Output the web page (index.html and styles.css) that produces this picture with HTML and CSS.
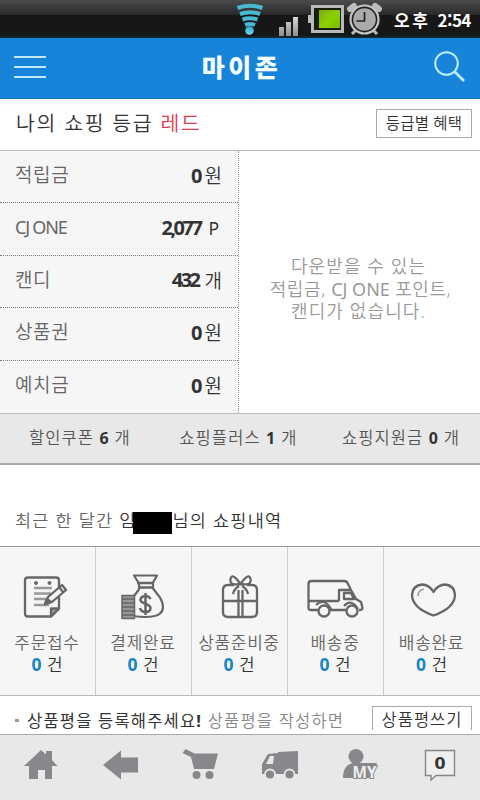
FILE: index.html
```html
<!DOCTYPE html>
<html lang="ko">
<head>
<meta charset="utf-8">
<title>마이존</title>
<link rel="stylesheet" href="styles.css">
</head>
<body>
<div class="status">
  <svg class="status-icons" viewBox="0 0 150 38" width="150" height="38">
    <defs>
      <linearGradient id="wifi" x1="0" y1="0" x2="0" y2="1"><stop offset="0" stop-color="#2aa5c4"/><stop offset="1" stop-color="#7adcf0"/></linearGradient>
      <linearGradient id="metal" x1="0" y1="0" x2="0" y2="1"><stop offset="0" stop-color="#d8d8d8"/><stop offset="1" stop-color="#8d8d8d"/></linearGradient>
      <linearGradient id="green" x1="0" y1="0" x2="1" y2="1"><stop offset="0" stop-color="#7ba80a"/><stop offset=".5" stop-color="#8dd000"/><stop offset="1" stop-color="#76bd00"/></linearGradient>
    </defs>
    <g fill="none" stroke="#48b9d5" stroke-width="4">
      <path d="M7.500 8Q20 3.500 32.500 8"/><path d="M10 14Q20 10.500 30 14"/><path d="M12.500 19.500Q20 17 27.500 19.500"/><path d="M15 24.800Q20 23 25 24.800"/>
    </g>
    <circle cx="19.500" cy="30.500" r="4.300" fill="url(#wifi)"/>
    <path fill="url(#metal)" d="M49 27h5v9h-5zM56 22h5v14h-5zM63 17h5v19h-5z"/>
    <path fill="none" stroke="#b9b9b9" stroke-width="3" d="M82.500 6.500h30v25h-30z"/>
    <path fill="#bbb" d="M78 15h4v8h-4z"/><path fill="#171d08" d="M84 8h27v22H84z"/><path fill="url(#green)" d="M89 10h21v18H89z"/>
    <g stroke="#bbb" fill="none"><path stroke-width="3" d="M126 30l-4 4M143 30l4 4"/><path stroke-width="6" stroke-linecap="round" d="M120 9l4-3M145 6l4 3"/></g>
    <circle cx="134.500" cy="19.500" r="14" fill="#222" stroke="#c5c5c5" stroke-width="2.200"/><circle cx="134.500" cy="19.500" r="11.300" fill="#aaa"/>
    <path fill="none" stroke="#222" stroke-width="1.700" d="M134.500 12v9h-8"/>
  </svg>
  <span class="clock">오후 <b>2:54</b></span>
</div>
<header class="header">
  <svg width="32" height="24" viewBox="0 0 32 24"><path stroke="#bfe9ff" stroke-width="2" d="M0 2h32M0 12h32M0 22h32"/></svg>
  <h1>마이존</h1>
  <svg width="32" height="32" viewBox="0 0 32 32" fill="none" stroke="#bcecff"><circle cx="13.500" cy="12.500" r="11.300" stroke-width="2"/><path stroke-width="2.600" d="M21.500 20.500l9.500 9.500"/></svg>
</header>
<section class="grade">
  <h2>나의 쇼핑 등급 <em>레드</em></h2>
  <span class="button grade-button">등급별 혜택</span>
</section>
<section class="assets">
  <div class="asset-list">
    <div class="asset"><span class="name">적립금</span><b>0</b><span class="unit">원</span></div>
    <div class="asset"><span class="name latin">CJ ONE</span><b class="tight">2,077</b><span class="unit point">P</span></div>
    <div class="asset"><span class="name">캔디</span><b class="tight">432</b><span class="unit">개</span></div>
    <div class="asset"><span class="name">상품권</span><b>0</b><span class="unit">원</span></div>
    <div class="asset"><span class="name">예치금</span><b>0</b><span class="unit">원</span></div>
  </div>
  <p class="empty"><span class="loose">다운받을 수 있는</span><span class="mid">적립금, <span class="brand">CJ ONE</span> 포인트,</span><span class="loose">캔디가 없습니다.</span></p>
</section>
<section class="coupons">
  <span>할인쿠폰 <b>6</b> 개</span><span class="plus">쇼핑플러스 <b>1</b> 개</span><span>쇼핑지원금 <b>0</b> 개</span>
</section>
<h3 class="history"><span>최근 한 달간</span> 임<i class="mask"></i>님의 쇼핑내역</h3>
<section class="orders">
  <div class="order">
    <svg viewBox="0 0 60 50" width="60" height="50" fill="none" stroke="#666" stroke-width="2.300" stroke-linejoin="round">
      <path d="M10 4.500h28q3 0 3 3v28l-8 8H10q-3 0-3-3v-33q0-3 3-3z"/><path fill="#999" d="M33 43.500v-8h8z"/><path stroke="#999" d="M16 15h18M16 20.500h17M16 26h12M16 32h15"/><path fill="#f5f5f5" d="M27 31l3-7 14-12 4 5-14 12z"/><path d="M41 14l4 5"/><path fill="#666" d="M27 31l2-5 4 3z"/><circle cx="18" cy="10" r="1.500" fill="#666" stroke-width="1"/><circle cx="31.500" cy="10" r="1.500" fill="#666" stroke-width="1"/>
    </svg><span class="label">주문접수</span><span class="count"><b>0</b> 건</span></div>
  <div class="order">
    <svg viewBox="0 0 60 50" width="60" height="50" fill="none" stroke="#666" stroke-width="2.200" stroke-linejoin="round">
      <path d="M20 2.500h23l-4 7v6l7 9q6 11 0 16-4 3.500-15 3.500t-14-2.500q-5-6 1-16l7-9v-6z"/><path stroke-width="2.500" d="M23 10h17M24 14.500h15"/><path fill="#999" stroke-width="1.500" d="M8 22.500h12.500v23H8z"/><path stroke-width="1.600" d="M8 26h12.500M8 30h12.500M8 34h12.500M8 38h12.500M8 42h12.500"/><path stroke-width="2.500" d="M36.500 26Q35 23 31.500 23q-5 .5-5 4c0 4 10 3.500 10 8 0 3-2 4-5 4s-5-1.500-5.500-4M31.500 20v22"/>
    </svg><span class="label">결제완료</span><span class="count"><b>0</b> 건</span></div>
  <div class="order">
    <svg viewBox="0 0 60 50" width="60" height="50" fill="none" stroke="#666" stroke-width="2.300" stroke-linejoin="round">
      <path d="M24 12h-6q-5 0-5 5v22q0 5 5 5h24q5 0 5-5V17q0-5-5-5h-5M13 28h34M30.500 11Q19 13 20.500 6T30.500 11Q42 13 40.500 6T30.500 11M29 13q-5 3-6 8M32 13q5 3 6 8M28.500 17v26M32.500 17v26"/>
    </svg><span class="label">상품준비중</span><span class="count"><b>0</b> 건</span></div>
  <div class="order">
    <svg viewBox="0 0 60 50" width="60" height="50" fill="none" stroke="#666" stroke-width="2.300" stroke-linejoin="round">
      <path d="M12 37H5q-2.500 0-2.500-2V11q0-3 3-3H38q3 0 4 3l3 6 5 9 5 3 1.500 6q0 2-3.500 2M24 37h16M33 28V17h12M38 20h7l3 6H38zM3 28h30M10 32q8-8 15 4M38 33q7-8 14 3"/><circle cx="18" cy="38" r="5.500" fill="#f6f6f6"/><circle cx="46" cy="38" r="5.500" fill="#f6f6f6"/>
    </svg><span class="label">배송중</span><span class="count"><b>0</b> 건</span></div>
  <div class="order">
    <svg viewBox="0 0 60 50" width="60" height="50" fill="none" stroke="#666" stroke-width="2.300" stroke-linejoin="round">
      <path d="M30.500 19Q26 11.500 19 11.500q-9 1-10 10Q9 35 30.500 42.500 52 35 52 21.500q-1-9-9.500-10-7.500 0-12 7.500z"/><path stroke="#999" stroke-width="1.500" d="M15 23q0-6 6-7"/>
    </svg><span class="label">배송완료</span><span class="count"><b>0</b> 건</span></div>
</section>
<section class="review"><i class="dot"></i><p><strong>상품평을 등록해주세요<b>!</b></strong> 상품평을 작성하면</p><span class="button review-button">상품평쓰기</span></section>
<nav class="nav">
  <svg viewBox="0 0 80 60" fill="#87888b"><path d="M24 31L41 15l5 4.500V16h6v9l5.500 6H52v13h-7v-9h-7v9h-9V31z"/></svg>
  <svg viewBox="0 0 80 60" fill="#87888b"><path d="M23 30l18-14.500v7h17v15H41v7z"/></svg>
  <svg viewBox="0 0 80 60" fill="#87888b"><path d="M22.500 18l3-4 9 4.500h23.500L54 34H34l-3-12z"/><circle cx="36.500" cy="40" r="4"/><circle cx="49.500" cy="40" r="4"/></svg>
  <svg viewBox="0 0 80 60" fill="#87888b"><path d="M38 17l20-1v23H22V29l6-10 10-1z"/><path fill="#e8e8e8" d="M30 21h4l-1 8h-7z"/><g stroke="#e8e8e8" stroke-width="1.800"><circle cx="30" cy="39.500" r="5"/><circle cx="49.500" cy="39.500" r="5"/></g></svg>
  <svg viewBox="0 0 80 60" fill="#87888b"><circle cx="36" cy="21.500" r="7.500"/><path d="M23 43q0-13 10-15h24l-5 15z"/><text class="my" x="32.500" y="42.500" textLength="24" lengthAdjust="spacingAndGlyphs">MY</text></svg>
  <svg viewBox="0 0 80 60"><path fill="#eee" stroke="#85858a" stroke-width="1.400" d="M25.500 15.500h29v25H36l-5 4.500v-4.500h-5.500z"/><text class="zero" x="34.500" y="33.500" textLength="11" lengthAdjust="spacingAndGlyphs">0</text></svg>
</nav>
</body>
</html>
```
FILE: styles.css
```css
* { box-sizing: border-box; }
body {
  margin: 0; width: 480px; height: 800px; overflow: hidden;
  display: flex; flex-direction: column; background: #fff; color: #333;
  font-family: "Noto Sans", "Noto Sans CJK KR", sans-serif; font-weight: 350;
  white-space: nowrap;
}
h1, h2, h3, p { margin: 0; font-weight: inherit; }
i, em { font-style: normal; }
svg { display: block; flex: none; overflow: visible; }
b { font-weight: 700; }
.status { height: 38px; flex: none; display: flex; align-items: center; padding-left: 230px; background: linear-gradient(#4c4c4c, #292929 39%, #171717 40%, #171717 92%, #102b3e); }
.clock { margin-left: 14px; padding-top: 1px; color: #fff; font: 700 17px "Noto Sans CJK KR", sans-serif; letter-spacing: 2.5px; }
.clock b { letter-spacing: -.6px; font-size: 17px; }
.header { height: 61px; flex: none; display: flex; align-items: center; justify-content: space-between; padding: 0 15px 3px 14px; background: #1784da; border-bottom: 1px solid #1371b5; }
.header h1 { color: #f4fdff; font: 900 25px/1 "Noto Sans CJK KR", sans-serif; letter-spacing: 3.5px; padding-left: 4px; }
.grade { height: 52px; flex: none; display: flex; align-items: flex-start; justify-content: space-between; padding: 10px 8px 0 16px; background: linear-gradient(#eef5f9, #fff 7px); border-bottom: 1px solid #bbb; }
.grade h2 { font-size: 20.5px; line-height: 28px; letter-spacing: 1.7px; }
.grade em { color: #e03b50; }
.button { display: flex; align-items: center; justify-content: center; border: 1px solid #aaa; background: #fff; color: #333; }
.grade-button { width: 96px; height: 29px; font-size: 15.5px; padding-bottom: 2px; letter-spacing: .2px; }
.assets { height: 262px; flex: none; display: flex; }
.asset-list { width: 239px; display: grid; grid-template-rows: repeat(5, 1fr); background: #f6f6f6; border-right: 1px dotted #999; }
.asset { display: flex; align-items: center; padding: 0 16px 3px 15px; border-bottom: 1px dotted #777; font-size: 18px; }
.asset:last-child { border: 0; }
.name { flex: 1; color: #666; font-size: 19px; padding-bottom: 2px; letter-spacing: .6px; }
.asset b { font-size: 20px; margin-right: 2px; }
.asset .tight { letter-spacing: -2.5px; margin-right: 6px; }
.name.latin { font-size: 18px; font-weight: 400; letter-spacing: -1.2px; }
.unit { font-size: 19px; }
.point { font-size: 17.5px; font-weight: 400; padding: 0 3px 0 2px; }
.empty { flex: 1; display: flex; flex-direction: column; align-items: center; padding: 104px 2px 0 0; font-size: 18px; line-height: 22.5px; color: #999; }
.loose { letter-spacing: 1.1px; }
.mid { letter-spacing: .6px; padding-left: 4px; }
.brand { font-weight: 400; letter-spacing: 0; }
.coupons { height: 52px; flex: none; display: flex; justify-content: space-between; align-items: center; padding: 0 20px 3px 29px; background: #e8e8e8; border-top: 1px solid #bbb; border-bottom: 2px solid #aaa; color: #555; font-size: 16.5px; letter-spacing: 1.1px; }
.coupons b { color: #333; font-size: 16px; letter-spacing: .5px; }
.plus { padding-left: 4px; }
.history { height: 82px; flex: none; display: flex; align-items: center; padding: 28px 0 0 15px; border-bottom: 1px solid #999; font-size: 17.5px; letter-spacing: 1.25px; white-space: pre; }
.history span { color: #666; }
.mask { width: 39px; height: 22px; margin: 7px 1px 0 -4px; background: #000; z-index: 1; }
.orders { height: 149px; flex: none; display: grid; grid-template-columns: repeat(5, 96px); background: #f6f6f6; border-bottom: 1px solid #bbb; }
.order { display: flex; flex-direction: column; align-items: center; padding-top: 26px; border-right: 1px solid #ccc; }
.order:last-child { border: 0; }
.order svg { margin-left: 1px; }
.label { margin: 9px 1px 0 0; font-size: 17px; line-height: 22px; letter-spacing: .7px; color: #666; }
.count { font-size: 17px; line-height: 20px; margin-right: 1px; }
.count b { color: #1686c8; margin-right: 1px; font-size: 17.5px; }
.review { height: 38px; flex: none; display: flex; align-items: flex-start; padding: 10px 8px 0 15px; color: #888; font-size: 16.5px; }
.review p { flex: 1; line-height: 30px; letter-spacing: 1.2px; }
.review strong { font-weight: 400; color: #333; }
.dot { width: 4px; height: 3px; margin: 13px 8px 0 0; background: #999; }
.review-button { width: 100px; height: 24px; border-bottom: 0; font-size: 16.5px; letter-spacing: 1px; }
.nav { flex: 1; display: grid; grid-template-columns: repeat(6, 80px); background: #e8e8e8; border-top: 1px solid #aaa; }
.nav svg { width: 80px; height: 60px; }
.my { font: 700 16px "Noto Sans", sans-serif; fill: #eee; stroke: #87888b; stroke-width: 2px; paint-order: stroke; }
.zero { font: 700 16px "Noto Sans", sans-serif; fill: #333; }
```
